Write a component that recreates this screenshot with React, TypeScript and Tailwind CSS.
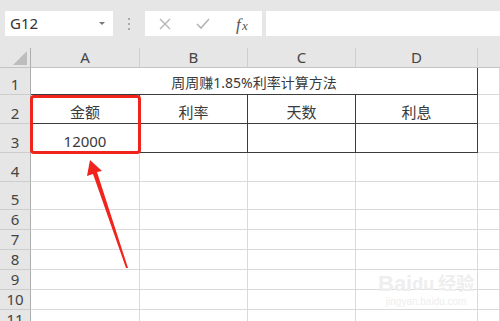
import React from "react";

const FONT = { fontFamily: '"Noto Sans", "Noto Sans CJK SC", sans-serif' };

const rowHeights = [27, 29, 29, 29, 28, 20, 20, 20, 20, 20, 20];

function HeaderCell({ children, last }: { children?: React.ReactNode; last?: boolean }) {
  return (
    <div
      className={
        "flex items-center justify-center bg-[#e6e6e6] text-[15px] text-[#444] border-b border-[#c4c4c4] " +
        (last ? "" : "border-r border-r-[#cfcfcf]")
      }
    >
      {children}
    </div>
  );
}

function RowHead({ n }: { n: number }) {
  return (
    <div className="flex items-end justify-center bg-[#e6e6e6] text-[15px] leading-[19px] text-[#444] border-r border-r-[#adadad] border-b border-b-[#cdcdcd]">
      {n}
    </div>
  );
}

function Cell({ children, dark }: { children?: React.ReactNode; dark?: boolean }) {
  const r = dark ? "border-r-[#3c3c3c]" : "border-r-[#dadada]";
  const b = dark ? "border-b-[#3c3c3c]" : "border-b-[#dadada]";
  return (
    <div className={"flex items-end justify-center bg-white text-[15px] leading-[22px] text-[#3a3a3a] border-r border-b " + r + " " + b}>
      {children}
    </div>
  );
}

export default function App() {
  return (
    <div className="relative w-[500px] h-[321px] overflow-hidden bg-white" style={FONT}>
      {/* toolbar */}
      <div className="flex h-[48px] bg-[#e6e6e6] pt-[11px] pl-[5px]">
        <div className="relative flex h-[25px] w-[108px] items-center bg-white pl-[5px] text-[15px] text-[#333]">
          G12
          <div className="absolute right-[8px] top-[11px] h-0 w-0 border-l-[3px] border-r-[3px] border-t-[3px] border-l-transparent border-r-transparent border-t-[#777]" />
        </div>
        <div className="flex w-[32px] flex-col items-center justify-center gap-[3px] h-[25px]">
          <div className="h-[2px] w-[2px] bg-[#aaa]" />
          <div className="h-[2px] w-[2px] bg-[#aaa]" />
          <div className="h-[2px] w-[2px] bg-[#aaa]" />
        </div>
        <div className="flex h-[25px] w-[117px] items-center bg-white">
          <svg width="117" height="25" viewBox="0 0 117 25">
            <path d="M15 8 L25 18 M25 8 L15 18" stroke="#b5b5b5" strokeWidth="1.4" fill="none" />
            <path d="M52 13 L56 17 L64 8" stroke="#b5b5b5" strokeWidth="1.6" fill="none" />
            <text x="91" y="19" fontFamily="'Liberation Serif', serif" fontStyle="italic" fontSize="17" fill="#555">f</text>
            <text x="97" y="19" fontFamily="'Liberation Serif', serif" fontStyle="italic" fontSize="13" fill="#555">x</text>
          </svg>
        </div>
        <div className="ml-[4px] h-[25px] flex-1 bg-white" />
      </div>

      {/* sheet grid */}
      <div
        className="grid"
        style={{
          gridTemplateColumns: "31px 109px 108px 108px 122px 1fr",
          gridTemplateRows: "20px " + rowHeights.map((h) => h + "px").join(" "),
        }}
      >
        <div className="relative bg-[#e6e6e6] border-r border-r-[#adadad] border-b border-b-[#c4c4c4]">
          <svg className="absolute right-[3px] bottom-[2px]" width="14" height="14" viewBox="0 0 14 14">
            <polygon points="14,0 14,14 0,14" fill="#bdbdbd" />
          </svg>
        </div>
        <HeaderCell>A</HeaderCell>
        <HeaderCell>B</HeaderCell>
        <HeaderCell>C</HeaderCell>
        <HeaderCell>D</HeaderCell>
        <HeaderCell last />

        <RowHead n={1} />
        <div className="col-span-4 flex items-end justify-center bg-white text-[14px] leading-[23px] text-[#3a3a3a] border-r border-r-[#3c3c3c] border-b border-b-[#3c3c3c]">
          周周赚1.85%利率计算方法
        </div>
        <Cell />

        <RowHead n={2} />
        <Cell dark>金额</Cell>
        <Cell dark>利率</Cell>
        <Cell dark>天数</Cell>
        <Cell dark>利息</Cell>
        <Cell />

        <RowHead n={3} />
        <Cell dark>12000</Cell>
        <Cell dark />
        <Cell dark />
        <Cell dark />
        <Cell />

        {[4, 5, 6, 7, 8, 9, 10, 11].map((n) => (
          <React.Fragment key={n}>
            <RowHead n={n} />
            <Cell />
            <Cell />
            <Cell />
            <Cell />
            <Cell />
          </React.Fragment>
        ))}
      </div>

      {/* red highlight box */}
      <div className="absolute left-[30px] top-[95px] h-[59px] w-[111px] rounded-[4px] border-[3px] border-[#f0241c]" />

      {/* red arrow */}
      <svg className="absolute left-0 top-0" width="500" height="321" viewBox="0 0 500 321">
        <polygon points="90,160 102,171 97,172 128,268 126,268 93,174 87,176" fill="#f0241c" />
      </svg>

      {/* watermark */}
      <div className="absolute left-[378px] top-[272px] flex flex-col items-center text-[#eeeeee]" style={{ fontFamily: '"Liberation Sans", "Noto Sans CJK SC", sans-serif' }}>
        <div className="flex items-end text-[22px] font-bold leading-[24px]">
          <span>Bai</span>
          <span className="text-[18px]">du</span>
          <span className="ml-[4px] text-[18px]">经验</span>
        </div>
        <div className="text-[10px] leading-[12px]">jingyan.baidu.com</div>
      </div>
    </div>
  );
}
